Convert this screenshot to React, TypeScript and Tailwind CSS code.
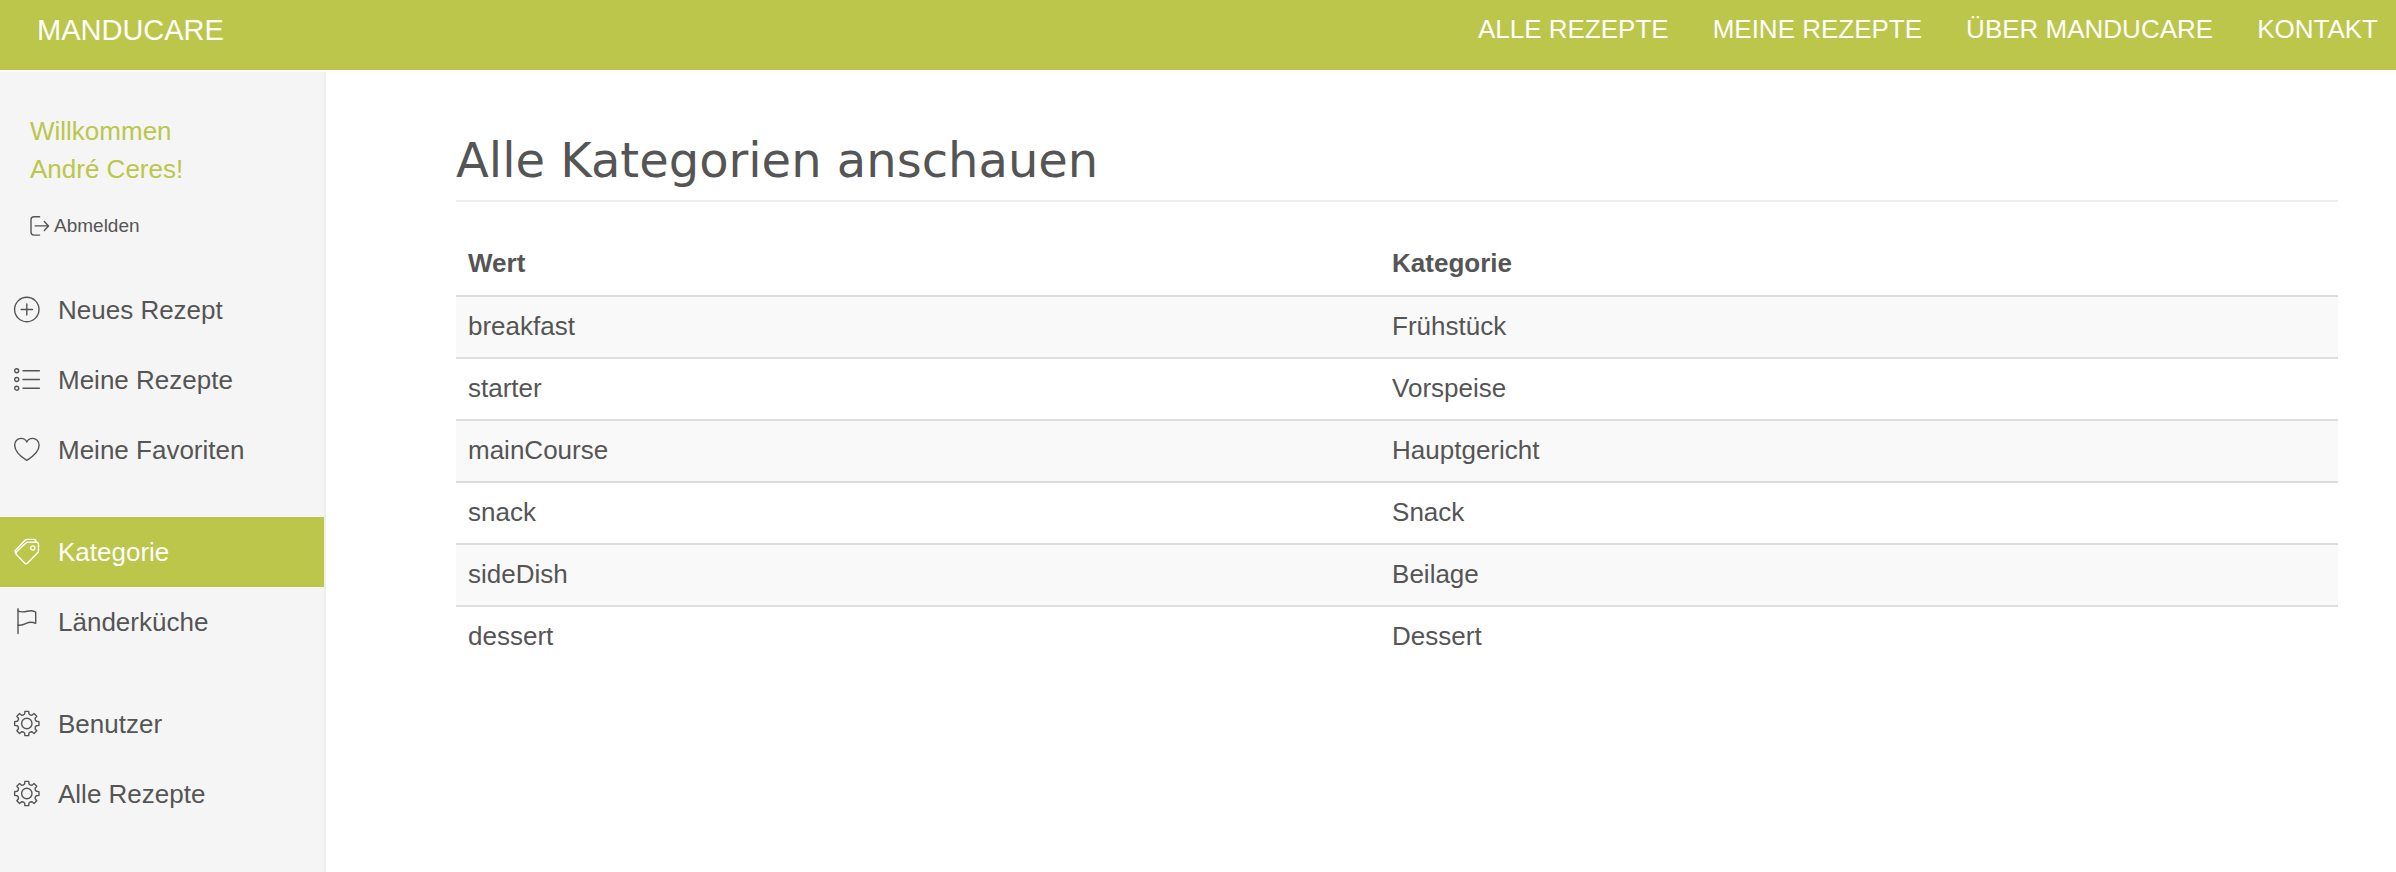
import type { ReactNode } from 'react';

type Item = { label: string; icon: ReactNode; active?: boolean };

function Glyph({ children }: { children: ReactNode }) {
  return (
    <svg
      viewBox="0 0 26 26"
      className="size-[26px] shrink-0 overflow-visible"
      fill="none"
      stroke="currentColor"
      strokeWidth="1.4"
      strokeLinecap="round"
      strokeLinejoin="round"
      aria-hidden="true"
    >
      {children}
    </svg>
  );
}

const plusIcon = (
  <Glyph>
    <circle cx="12.8" cy="12.5" r="12.2" />
    <path d="M7.2 12.5H18.4M12.8 6.9V18.1" />
  </Glyph>
);

const listIcon = (
  <Glyph>
    <circle cx="2.7" cy="3.8" r="2" />
    <circle cx="2.7" cy="12.5" r="2" />
    <circle cx="2.7" cy="21.2" r="2" />
    <path d="M9 3.8H25.4M9 12.5H25.4M9 21.2H25.4" />
  </Glyph>
);

const heartIcon = (
  <Glyph>
    <path d="M12.8 23.4C9.2 21.2 .7 15.8 .7 8.3C.7 4.2 3.6 1.4 7 1.4C9.6 1.4 11.8 2.9 12.8 5C13.8 2.9 16 1.4 18.6 1.4C22 1.4 25.1 4.2 25.1 8.3C25.1 15.8 16.4 21.2 12.8 23.4Z" />
  </Glyph>
);

const tagIcon = (
  <Glyph>
    <path d="M14 3.2H22.2Q24.5 3.2 24.5 5.4V11.2Q24.5 12.8 23.4 13.9L13.6 24Q12.1 25.4 10.6 24L2.4 15.6Q1.2 14.3 2.4 13L11.6 4.2Q12.6 3.2 14 3.2Z" />
    <path d="M1.9 14.6Q.3 12.6 1.8 10.9L10.8 1.5Q11.8 .4 13.2 .4H20Q22 .4 22.2 3.2" />
    <circle cx="18.8" cy="9" r="2.1" />
  </Glyph>
);

const flagIcon = (
  <Glyph>
    <path d="M4 -.3V24.5" />
    <path d="M4 1.8C9 4.6 13.6 1.4 17.4 1.7Q19.8 1.9 21.7 3V14.3C18.8 13.1 15.8 12.7 12.2 14.4C9.2 15.9 6.8 16.8 4 16" />
  </Glyph>
);

// Eight evenly spaced teeth around the hub.
const gearPoints = Array.from({ length: 8 }, (_, tooth) =>
  [
    [-13, 9.8],
    [-9, 12.3],
    [9, 12.3],
    [13, 9.8],
    [22.5, 9.2],
  ].map(([offset, radius]) => {
    const angle = ((tooth * 45 + offset) * Math.PI) / 180;
    return `${(12.8 + radius * Math.cos(angle)).toFixed(2)},${(12.5 + radius * Math.sin(angle)).toFixed(2)}`;
  }),
)
  .flat()
  .join(' ');

const gearIcon = (
  <Glyph>
    <polygon points={gearPoints} />
    <circle cx="12.8" cy="12.5" r="5.2" />
  </Glyph>
);

const navLinks = ['Alle Rezepte', 'Meine Rezepte', 'Über Manducare', 'Kontakt'];

const groups: Item[][] = [
  [
    { label: 'Neues Rezept', icon: plusIcon },
    { label: 'Meine Rezepte', icon: listIcon },
    { label: 'Meine Favoriten', icon: heartIcon },
  ],
  [
    { label: 'Kategorie', icon: tagIcon, active: true },
    { label: 'Länderküche', icon: flagIcon },
  ],
  [
    { label: 'Benutzer', icon: gearIcon },
    { label: 'Alle Rezepte', icon: gearIcon },
  ],
];

const categories = [
  ['breakfast', 'Frühstück'],
  ['starter', 'Vorspeise'],
  ['mainCourse', 'Hauptgericht'],
  ['snack', 'Snack'],
  ['sideDish', 'Beilage'],
  ['dessert', 'Dessert'],
];

function Header() {
  return (
    <header className="flex h-[70px] items-start justify-between bg-[#bbc64b] pl-[37px] pr-[18px] text-white">
      <a href="#" className="text-[29px] leading-[60px] uppercase">
        Manducare
      </a>
      <nav className="flex gap-11 text-[26px] leading-[58px] uppercase">
        {navLinks.map((label) => (
          <a key={label} href="#">
            {label}
          </a>
        ))}
      </nav>
    </header>
  );
}

function Sidebar() {
  return (
    <aside className="w-[326px] shrink-0 border-r-2 border-[#eeeeee] bg-[#f5f5f5] pt-10">
      <div className="px-[30px]">
        <p className="leading-[38px] text-[#bbc64b]">
          Willkommen
          <br />
          André Ceres!
        </p>
        <a href="#" className="mt-6 flex h-7 items-center gap-1 text-[19px]">
          <svg
            viewBox="0 0 20 20"
            className="size-5 shrink-0"
            fill="none"
            stroke="currentColor"
            strokeWidth="1.4"
            strokeLinecap="round"
            strokeLinejoin="round"
            aria-hidden="true"
          >
            <path d="M9.6 .8H4Q1 .8 1 3.8V16.1Q1 19.1 4 19.1H9.6M5.2 9.9H18.3M14.3 5.4L18.5 9.9L14.3 14.4" />
          </svg>
          Abmelden
        </a>
      </div>
      <nav className="mt-[35px] flex flex-col gap-8 pb-10">
        {groups.map((items, i) => (
          <ul key={i}>
            {items.map(({ label, icon, active }) => (
              <li key={label}>
                <a
                  href="#"
                  className={
                    active
                      ? 'flex h-[70px] items-center gap-[18px] bg-[#bbc64b] px-3.5 text-white'
                      : 'flex h-[70px] items-center gap-[18px] px-3.5'
                  }
                >
                  {icon}
                  {label}
                </a>
              </li>
            ))}
          </ul>
        ))}
      </nav>
    </aside>
  );
}

export default function App() {
  return (
    <div className="flex min-h-screen flex-col bg-white font-['Liberation_Sans',Arial,sans-serif] text-[26px] text-[#555555]">
      <Header />
      <div className="mt-0.5 flex grow">
        <Sidebar />
        <main className="grow pr-[58px] pl-[130px] pt-14">
          <h1 className="border-b-2 border-[#eeeeee] pt-0.5 pb-2.5 font-['DejaVu_Sans',sans-serif] text-[48px] leading-[60px]">
            Alle Kategorien anschauen
          </h1>
          <table className="mt-[31px] w-full text-left leading-[30px]">
            <thead>
              <tr>
                <th className="w-[49.1%] px-3 pt-[15px] pb-[17px]">Wert</th>
                <th className="px-3 pt-[15px] pb-[17px]">Kategorie</th>
              </tr>
            </thead>
            <tbody>
              {categories.map(([value, name]) => (
                <tr key={value} className="border-t-2 border-[#dddddd] odd:bg-[#f9f9f9]">
                  <td className="px-3 pt-3.5 pb-4">{value}</td>
                  <td className="px-3 pt-3.5 pb-4">{name}</td>
                </tr>
              ))}
            </tbody>
          </table>
        </main>
      </div>
    </div>
  );
}
